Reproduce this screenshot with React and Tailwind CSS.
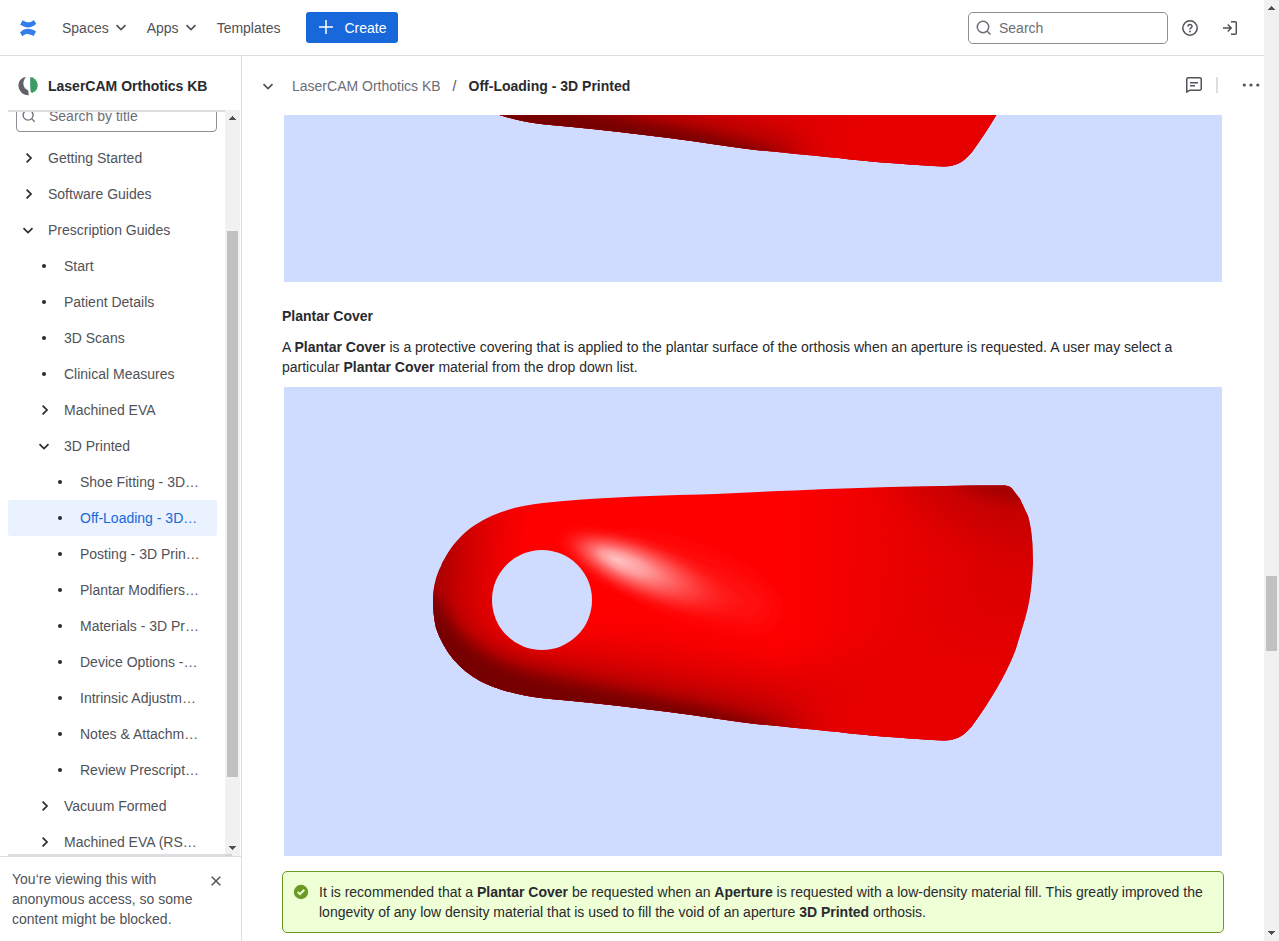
import React from "react";

const SHAPE =
  "M433 600 C433 588 436 575 441 566 C442 562 444 560 446 556 C451 547 462 533 475 525 C495 512 517 506 543 503 C590 498 640 496 700 494.5 C760 492 830 488.500 890 487 C930 486 975 485.300 1005 485.500 Q1010 486 1012 488.500 L1020 499 L1028 516 C1032 530 1033 545 1033 563 C1032 590 1029 605 1025 619 L1015.500 650 C1005 677 990 701 972 726 C962 738 955 740 944 740.500 C915 739 880 736.500 850 733.500 C810 729 770 726 740 722 C680 713 610 704 545 698.500 C520 696 495 689 480 681 C460 670 444 652 436 628 C434 619 433 610 433 600 Z";

function Orthosis({ id, box, className }) {
  return (
    <svg viewBox={box} className={className} preserveAspectRatio="none">
      <defs>
        <clipPath id={`${id}-clip`}><path d={SHAPE} /></clipPath>
        <linearGradient id={`${id}-base`} gradientUnits="userSpaceOnUse" x1="433" y1="575" x2="1033" y2="600">
          <stop offset="0" stopColor="#a40000" />
          <stop offset="0.05" stopColor="#cc0000" />
          <stop offset="0.11" stopColor="#ee0000" />
          <stop offset="0.16" stopColor="#ff0000" />
          <stop offset="0.58" stopColor="#ff0000" />
          <stop offset="0.78" stopColor="#e90000" />
          <stop offset="0.92" stopColor="#dd0000" />
          <stop offset="1" stopColor="#dc0000" />
        </linearGradient>
        <radialGradient id={`${id}-shine`} cx="0.5" cy="0.5" r="0.5" fx="0.32" fy="0.5">
          <stop offset="0" stopColor="#ffc4c4" stopOpacity="1" />
          <stop offset="0.25" stopColor="#ffb0b0" stopOpacity=".85" />
          <stop offset="0.55" stopColor="#ff8080" stopOpacity=".5" />
          <stop offset="0.8" stopColor="#ff5050" stopOpacity=".18" />
          <stop offset="1" stopColor="#ff2020" stopOpacity="0" />
        </radialGradient>
        <filter id={`${id}-b6`} x="-50%" y="-100%" width="200%" height="300%"><feGaussianBlur stdDeviation="7" /></filter>
        <filter id={`${id}-b12`} x="-50%" y="-100%" width="200%" height="300%"><feGaussianBlur stdDeviation="13" /></filter>
        <filter id={`${id}-b22`} x="-50%" y="-100%" width="200%" height="300%"><feGaussianBlur stdDeviation="22" /></filter>
      </defs>
      <rect x="284" y="387" width="938" height="469" fill="#cfdcff" />
      <g clipPath={`url(#${id}-clip)`}>
        <rect x="430" y="480" width="610" height="265" fill={`url(#${id}-base)`} />
        <path d="M400 590 L450 610 C490 645 530 650 600 650 C680 660 740 670 850 690 L1000 700 L1000 780 L400 780 Z" fill="#cc0000" filter={`url(#${id}-b22)`} />
        <path d="M800 680 L920 630 L1060 630 L1000 780 L820 780 Z" fill="#e60000" filter={`url(#${id}-b22)`} />
        <path d="M400 590 L440 600 C456 640 490 655 530 665 C600 682 670 692 740 708 L800 728 L760 770 L400 770 Z" fill="#9a0000" filter={`url(#${id}-b12)`} />
        <path d="M420 590 L439 600 C452 640 485 660 525 673 C590 689 660 699 715 712 L775 730 L740 770 L400 770 Z" fill="#760000" filter={`url(#${id}-b6)`} />
        <path d="M890 460 L1050 460 L1050 550 C1000 545 950 520 900 480 Z" fill="#c40000" filter={`url(#${id}-b22)`} />
        <path d="M955 470 L1030 470 L1025 502 C1000 502 980 494 955 482 Z" fill="#a20000" filter={`url(#${id}-b6)`} />
        <ellipse cx="690" cy="582" rx="90" ry="26" transform="rotate(21 690 582)" fill="#ff2020" opacity=".6" filter={`url(#${id}-b12)`} />
        <ellipse cx="650" cy="573" rx="102" ry="33" transform="rotate(22 650 573)" fill={`url(#${id}-shine)`} />
      </g>
      <circle cx="542" cy="600" r="50" fill="#cfdcff" />
    </svg>
  );
}

function Chevron({ dir = "down", className = "" }) {
  return (
    <svg viewBox="0 0 16 16" className={`size-4 shrink-0 ${className}`} fill="none" stroke="currentColor" strokeWidth="1.7">
      <path d={dir === "down" ? "M3.500 6.200 L8 10.600 L12.500 6.200" : "M6.600 3.600 L11 8 L6.600 12.400"} />
    </svg>
  );
}

const ITEMS = [
  ["Getting Started", 0, "right"],
  ["Software Guides", 0, "right"],
  ["Prescription Guides", 0, "down"],
  ["Start", 1],
  ["Patient Details", 1],
  ["3D Scans", 1],
  ["Clinical Measures", 1],
  ["Machined EVA", 1, "right"],
  ["3D Printed", 1, "down"],
  ["Shoe Fitting - 3D…", 2],
  ["Off-Loading - 3D…", 2],
  ["Posting - 3D Prin…", 2],
  ["Plantar Modifiers…", 2],
  ["Materials - 3D Pr…", 2],
  ["Device Options -…", 2],
  ["Intrinsic Adjustm…", 2],
  ["Notes & Attachm…", 2],
  ["Review Prescript…", 2],
  ["Vacuum Formed", 1, "right"],
  ["Machined EVA (RS…", 1, "right"],
];
const INDENT = ["pl-3", "pl-7", "pl-11"];

function TreeItem({ label, level, chevron, selected }) {
  return (
    <div className={`flex h-9 shrink-0 items-center gap-3 rounded-[3px] ${INDENT[level]} ${selected ? "bg-[#e9f2fe] text-[#1868db]" : "text-[#505258]"}`}>
      {chevron ? (
        <Chevron dir={chevron} className="text-[#292a2e]" />
      ) : (
        <span className="flex size-4 shrink-0 items-center justify-center"><span className="size-1 rounded-full bg-[#292a2e]" /></span>
      )}
      <span className="whitespace-nowrap">{label}</span>
    </div>
  );
}

function Arrow({ up }) {
  return (
    <svg viewBox="0 0 15 16" className="block h-4 w-full shrink-0" shapeRendering="crispEdges">
      <path d={up ? "M3.500 10 L7.500 6 L11.500 10 Z" : "M3.500 6 L7.500 10 L11.500 6 Z"} fill="#505050" />
    </svg>
  );
}

function SearchIcon({ className }) {
  return (
    <svg viewBox="0 0 16 16" className={className} fill="none" stroke="#6b6e76" strokeWidth="1.5">
      <circle cx="7" cy="7" r="5.700" /><path d="M11 11 L14.500 14.500" />
    </svg>
  );
}

function Header() {
  return (
    <header className="flex h-14 shrink-0 items-center border-b border-[#dddee1] pl-4 text-[#505258]">
      <svg viewBox="0 0 24 24" className="size-6" fill="#357de8">
        <path d="M6.500 4.200 C10 6 14 8 17.800 4 L20.200 7.800 C15 13 9.500 12 4.200 8.800 Z" />
        <path d="M17.700 20.100 C14.200 18.300 10.200 16.300 6.400 20.300 L4 16.500 C9.200 11.300 14.700 12.300 20 15.500 Z" />
      </svg>
      <span className="ml-[22px]">Spaces</span><Chevron className="mb-px ml-1" />
      <span className="ml-[18px]">Apps</span><Chevron className="mb-px ml-1" />
      <span className="ml-[18px]">Templates</span>
      <button className="ml-[26px] flex h-[31px] w-[92px] items-center rounded-[3px] bg-[#1868db] pl-3 text-white">
        <svg viewBox="0 0 16 16" className="size-4" stroke="currentColor" strokeWidth="1.500"><path d="M1 7 H15 M8 0 V14" /></svg>
        <span className="ml-2.5">Create</span>
      </button>
      <div className="ml-auto flex h-8 w-[200px] items-center rounded-[5px] border border-[#8c8f97] pl-[7px] text-[#6b6e76]">
        <SearchIcon className="size-4" /><span className="ml-[7px]">Search</span>
      </div>
      <svg viewBox="0 0 16 16" className="ml-3.5 size-4" fill="none" stroke="currentColor" strokeWidth="1.500">
        <circle cx="8" cy="8" r="7.200" />
        <path d="M6 6.600 C6 3.900 10 4 10 6.400 C10 8 8 7.800 8 9.500" />
        <circle cx="8" cy="11.500" r=".9" fill="currentColor" stroke="none" />
      </svg>
      <svg viewBox="0 0 16 16" className="mr-[26px] ml-6 size-4" fill="none" stroke="currentColor" strokeWidth="1.500">
        <path d="M9 1.700 H13.300 Q14.300 1.700 14.300 2.700 V13.300 Q14.300 14.300 13.300 14.300 H9 M1 8 H9 M5.700 4.500 L9.200 8 L5.700 11.500" />
      </svg>
    </header>
  );
}

function Sidebar() {
  return (
    <aside className="flex w-[242px] shrink-0 flex-col border-r border-[#dddee1]">
      <div className="flex h-[54px] shrink-0 items-center gap-2 pt-1.5 pl-4">
        <svg viewBox="0 0 24 24" className="size-6">
          <path d="M10 3 C5 3.500 2.300 7.500 2.500 12 C2.800 17 7 21.500 12.800 21.300 L12.200 16.500 C9 15 6.800 12 7.500 8 C8 6 8.800 4.300 10 3 Z" fill="#606266" />
          <path d="M14.200 3.300 L17.500 3.600 L18 5 L19.600 5.200 L19.800 6.800 L21.200 7.500 L20.900 9 L22 10 L21.300 11.300 L22 12.600 L21 13.800 L21.200 15.200 L19.800 16 L19.300 17.500 L17.600 17.800 L16.600 19 L14.800 18.300 C14 13 14 8 14.200 3.300 Z" fill="#3c9c64" />
        </svg>
        <span className="font-bold text-[#292a2e]">LaserCAM Orthotics KB</span>
      </div>
      <div className="flex h-[747px] shrink-0 border-b border-[#dddee1]">
        <div className="ml-2 flex w-[217px] flex-col overflow-hidden border-y-2 border-[#dddee1] pr-2">
          <div className="mx-2 -mt-3 mr-0 flex h-8 shrink-0 items-center rounded border border-[#8c8f97] pl-[5px] text-[#6b6e76]">
            <SearchIcon className="size-[14px]" /><span className="ml-[13px]">Search by title</span>
          </div>
          <div className="mt-2 flex flex-col">
            {ITEMS.map(([label, level, chevron], i) => <TreeItem key={label} label={label} level={level} chevron={chevron} selected={i === 10} />)}
          </div>
        </div>
        <div className="flex w-[15px] flex-col bg-[#f1f1f1]">
          <Arrow up />
          <div className="mx-0.5 mt-[105px] h-[546px] bg-[#c1c1c1]" />
          <div className="mt-auto -mb-0.5"><Arrow /></div>
          <div className="h-0.5 w-[7px] bg-[#d3d4d6]" />
        </div>
      </div>
      <div className="flex pt-3 pl-3 leading-5 text-[#505258]">
        <p className="w-[198px]">You‘re viewing this with anonymous access, so some content might be blocked.</p>
        <svg viewBox="0 0 12 12" className="mt-1.5 size-3" stroke="currentColor" strokeWidth="1.500"><path d="M1.700 1.700 L10.300 10.300 M10.300 1.700 L1.700 10.300" /></svg>
      </div>
    </aside>
  );
}

function Main() {
  return (
    <main className="flex min-w-0 flex-1 flex-col text-[#292a2e]">
      <div className="flex h-[59px] shrink-0 items-center pl-[18px] whitespace-nowrap">
        <Chevron className="text-[#505258]" />
        <span className="ml-4 text-[#6b6e76]">LaserCAM Orthotics KB</span>
        <span className="ml-3 text-[#505258]">/</span>
        <span className="ml-3 font-bold">Off-Loading - 3D Printed</span>
        <svg viewBox="0 0 16 16" className="mb-0.5 ml-auto size-4 text-[#505258]" fill="none" stroke="currentColor" strokeWidth="1.500">
          <path d="M.75 15 V2.200 Q.75 .75 2.200 .75 H13.800 Q15.250 .75 15.250 2.200 V11.800 Q15.250 13.200 13.800 13.200 H4 Z M4 5.700 H12 M4 8.700 H9" />
        </svg>
        <span className="mb-0.5 ml-3.5 h-4 w-0.5 bg-[#dddee1]" />
        <svg viewBox="0 0 18 4" className="mr-1 mb-0.5 ml-6 h-1 w-[18px]" fill="#505258"><circle cx="2.300" cy="2" r="1.600" /><circle cx="9" cy="2" r="1.600" /><circle cx="15.800" cy="2" r="1.600" /></svg>
      </div>
      <div className="flex flex-col pr-10 pl-10 leading-5">
        <Orthosis id="upper" box="284 689 938 167" className="ml-0.5 h-[167px] w-[938px] shrink-0" />
        <h3 className="mt-6 font-bold">Plantar Cover</h3>
        <p className="mt-[11px]">A <b>Plantar Cover</b> is a protective covering that is applied to the plantar surface of the orthosis when an aperture is requested. A user may select a particular <b>Plantar Cover</b> material from the drop down list.</p>
        <Orthosis id="lower" box="284 387 938 469" className="mt-2.5 ml-0.5 h-[469px] w-[938px] shrink-0" />
        <div className="mt-[15px] flex h-[62px] w-[942px] shrink-0 rounded-[5px] border border-[#6a9a23] bg-[#efffd6] pt-2.5 pl-2.5">
          <svg viewBox="0 0 16 16" className="mt-0.5 size-4 shrink-0 text-[#6a9a23]">
            <circle cx="8" cy="8" r="7.200" fill="currentColor" /><path d="M4.700 8 L7 10.200 L11.300 5.800" fill="none" stroke="#efffd6" strokeWidth="2" />
          </svg>
          <p className="ml-2.5 w-[896px]">It is recommended that a <b>Plantar Cover</b> be requested when an <b>Aperture</b> is requested with a low-density material fill. This greatly improved the longevity of any low density material that is used to fill the void of an aperture <b>3D Printed</b> orthosis.</p>
        </div>
      </div>
    </main>
  );
}

export default function App() {
  return (
    <div className="flex h-[941px] w-[1279px] overflow-hidden bg-white font-['Liberation_Sans',Arial,sans-serif] text-[14px] leading-5">
      <div className="flex w-[1264px] shrink-0 flex-col">
        <Header />
        <div className="flex min-h-0 flex-1"><Sidebar /><Main /></div>
      </div>
      <div className="flex w-[15px] flex-col bg-[#f1f1f1]">
        <Arrow up />
        <div className="mx-0.5 mt-[560px] h-[75px] bg-[#c1c1c1]" />
        <div className="mt-auto"><Arrow /></div>
      </div>
    </div>
  );
}
